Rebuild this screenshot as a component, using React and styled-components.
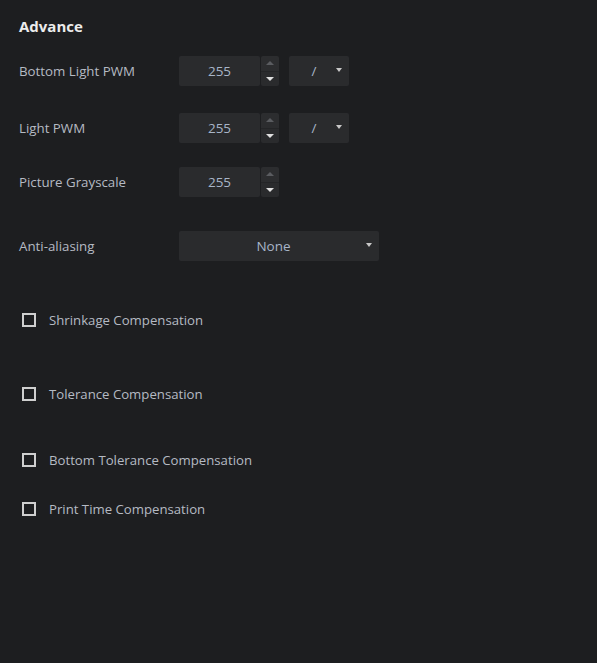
import React from "react";
import styled, { createGlobalStyle } from "styled-components";

const Global = createGlobalStyle`
  html, body { margin: 0; padding: 0; background: #1d1e20; }
  body { font-family: "Open Sans", "Noto Sans", sans-serif; }
`;

const Page = styled.div`
  width: 597px;
  height: 663px;
  box-sizing: border-box;
  padding: 16px 19px 0 19px;
  background: #1d1e20;
  display: flex;
  flex-direction: column;
`;

const Title = styled.div`
  font-size: 15px;
  font-weight: 700;
  color: #ececec;
  line-height: 20px;
  height: 20px;
`;

const Row = styled.div`
  display: flex;
  align-items: center;
  height: 30px;
  margin-top: ${(p) => p.$mt}px;
`;

const Label = styled.div`
  width: 160px;
  font-size: 13.3px;
  color: #b5bac3;
`;

const NumberBox = styled.div`
  width: 81px;
  height: 30px;
  background: #2a2b2d;
  border-radius: 2px;
  display: flex;
  align-items: center;
  justify-content: center;
  font-size: 13.5px;
  color: #a8b5c8;
`;

const Spinner = styled.div`
  width: 18px;
  height: 30px;
  margin-left: 1px;
  display: flex;
  flex-direction: column;
  border-radius: 2px;
  overflow: hidden;
`;

const SpinHalf = styled.div`
  flex: 1;
  background: ${(p) => (p.$top ? "#2c2d2f" : "#2a2b2d")};
  display: flex;
  align-items: center;
  justify-content: center;
  border-bottom: ${(p) => (p.$top ? "1px solid #242527" : "none")};
`;

const Arrow = styled.div`
  width: 0;
  height: 0;
  border-left: 4px solid transparent;
  border-right: 4px solid transparent;
  ${(p) =>
    p.$up
      ? `border-bottom: 4px solid #5a5c60;`
      : `border-top: 4px solid #e0e0e0;`}
`;

const Select = styled.div`
  width: ${(p) => p.$w}px;
  height: 30px;
  margin-left: ${(p) => p.$ml || 0}px;
  background: #2a2b2d;
  border-radius: 2px;
  display: flex;
  align-items: center;
  box-sizing: border-box;
  padding-right: 7px;
  font-size: 13.5px;
  color: #a8b5c8;
`;

const SelectText = styled.div`
  flex: 1;
  text-align: center;
  padding-left: ${(p) => p.$pl || 0}px;
`;

const Caret = styled.div`
  width: 0;
  height: 0;
  border-left: 3.5px solid transparent;
  border-right: 3.5px solid transparent;
  border-top: 4px solid #c8c8c8;
  margin-top: -3px;
`;

const CheckRow = styled.label`
  display: flex;
  align-items: center;
  height: 20px;
  margin-top: ${(p) => p.$mt}px;
  padding-left: 3px;
  cursor: pointer;
`;

const Box = styled.span`
  width: 14px;
  height: 14px;
  box-sizing: border-box;
  border: 2px solid #cfcfcf;
  display: inline-block;
  margin-right: 13px;
`;

const CheckText = styled.span`
  font-size: 13.2px;
  color: #b5bac3;
`;

function NumInput({ value }) {
  return (
    <>
      <NumberBox>{value}</NumberBox>
      <Spinner>
        <SpinHalf $top>
          <Arrow $up />
        </SpinHalf>
        <SpinHalf>
          <Arrow />
        </SpinHalf>
      </Spinner>
    </>
  );
}

export default function App() {
  return (
    <>
      <Global />
      <Page>
        <Title>Advance</Title>
        <Row $mt={20}>
          <Label>Bottom Light PWM</Label>
          <NumInput value="255" />
          <Select $w={60} $ml={10}>
            <SelectText $pl={3}>/</SelectText>
            <Caret />
          </Select>
        </Row>
        <Row $mt={27}>
          <Label>Light PWM</Label>
          <NumInput value="255" />
          <Select $w={60} $ml={10}>
            <SelectText $pl={3}>/</SelectText>
            <Caret />
          </Select>
        </Row>
        <Row $mt={24}>
          <Label>Picture Grayscale</Label>
          <NumInput value="255" />
        </Row>
        <Row $mt={34}>
          <Label>Anti-aliasing</Label>
          <Select $w={200}>
            <SelectText $pl={2}>None</SelectText>
            <Caret />
          </Select>
        </Row>
        <CheckRow $mt={49}>
          <Box />
          <CheckText>Shrinkage Compensation</CheckText>
        </CheckRow>
        <CheckRow $mt={54}>
          <Box />
          <CheckText>Tolerance Compensation</CheckText>
        </CheckRow>
        <CheckRow $mt={46}>
          <Box />
          <CheckText>Bottom Tolerance Compensation</CheckText>
        </CheckRow>
        <CheckRow $mt={29}>
          <Box />
          <CheckText>Print Time Compensation</CheckText>
        </CheckRow>
      </Page>
    </>
  );
}
